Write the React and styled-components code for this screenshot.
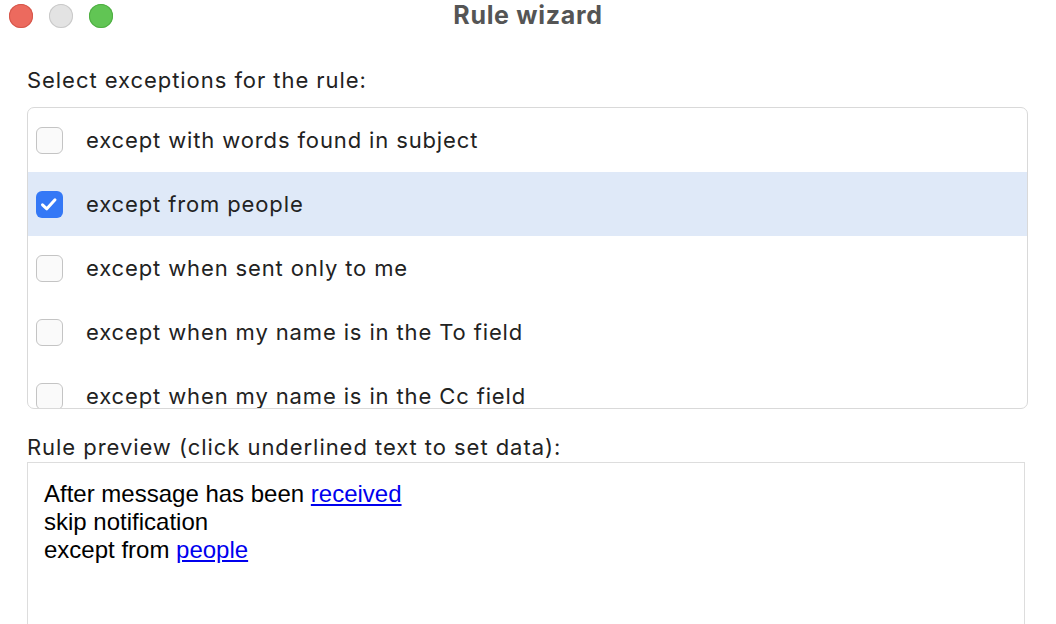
import styled, { createGlobalStyle } from "styled-components";

const EXCEPTIONS = [
  { id: "subject", label: "except with words found in subject", checked: false },
  { id: "people", label: "except from people", checked: true },
  { id: "only-me", label: "except when sent only to me", checked: false },
  { id: "to", label: "except when my name is in the To field", checked: false },
  { id: "cc", label: "except when my name is in the Cc field", checked: false },
];

const App = () => {
  return (
    <Window>
      <GlobalStyle />
      <TitleBar>
        <Lights>
          <Light color="#ec6a5e" edge="#d5574b" />
          <Light color="#e3e3e3" edge="#c9c9c9" />
          <Light color="#61c554" edge="#4fae43" />
        </Lights>
        <Title>Rule wizard</Title>
      </TitleBar>
      <Content>
        <SectionLabel>Select exceptions for the rule:</SectionLabel>
        <ExceptionList>
          {EXCEPTIONS.map(({ id, label, checked }) => (
            <ExceptionRow key={id} selected={checked}>
              <CheckBox checked={checked}>
                {checked && (
                  <svg width="27" height="27" viewBox="0 0 27 27">
                    <path
                      d="M6.5 13.8 L10.8 17.8 L19 8.8"
                      fill="none"
                      stroke="#fff"
                      strokeWidth="3"
                      strokeLinecap="round"
                      strokeLinejoin="round"
                    />
                  </svg>
                )}
              </CheckBox>
              <RowText>{label}</RowText>
            </ExceptionRow>
          ))}
        </ExceptionList>
        <PreviewLabel>Rule preview (click underlined text to set data):</PreviewLabel>
        <Preview>
          <div>
            After message has been <DataLink href="#">received</DataLink>
          </div>
          <div>skip notification</div>
          <div>
            except from <DataLink href="#">people</DataLink>
          </div>
        </Preview>
      </Content>
    </Window>
  );
};

export default App;

const GlobalStyle = createGlobalStyle`
  body {
    margin: 0;
    background: #ffffff;
    font-family: Inter, "Noto Sans", sans-serif;
    overflow: hidden;
  }
`;

const Window = styled.div`
  width: 1056px;
  height: 624px;
  background: #ffffff;
  overflow: hidden;
`;

const TitleBar = styled.div`
  height: 32px;
  display: flex;
  align-items: center;
  justify-content: center;
  position: relative;
`;

const Lights = styled.div`
  position: absolute;
  left: 9px;
  top: 4px;
  display: flex;
  gap: 16px;
`;

const Light = styled.span`
  width: 24px;
  height: 24px;
  border-radius: 50%;
  background: ${(p) => p.color};
  box-shadow: inset 0 0 0 1px ${(p) => p.edge};
`;

const Title = styled.div`
  font-size: 25px;
  font-weight: 700;
  letter-spacing: 0.7px;
  color: #555555;
  margin-top: -2px;
`;

const Content = styled.div`
  padding: 34px 27px 0 27px;
  display: flex;
  flex-direction: column;
`;

const SectionLabel = styled.div`
  font-size: 22px;
  letter-spacing: 0.95px;
  line-height: 28px;
  color: #222222;
  margin-bottom: 13px;
  white-space: nowrap;
`;

const ExceptionList = styled.div`
  height: 300px;
  border: 1.5px solid #d9d9d9;
  border-radius: 7px;
  overflow: hidden;
  width: 999px;
`;

const ExceptionRow = styled.div`
  height: 64px;
  display: flex;
  align-items: center;
  padding-left: 8px;
  background: ${(p) => (p.selected ? "#dfe9f8" : "transparent")};
`;

const CheckBox = styled.span`
  width: 27px;
  height: 27px;
  box-sizing: border-box;
  border-radius: 6px;
  display: flex;
  align-items: center;
  justify-content: center;
  background: ${(p) => (p.checked ? "#3478f6" : "#fafafa")};
  border: ${(p) => (p.checked ? "none" : "1.5px solid #c4c4c4")};
`;

const RowText = styled.span`
  margin-left: 23px;
  font-size: 22px;
  letter-spacing: 0.87px;
  color: #222222;
  white-space: nowrap;
`;

const PreviewLabel = styled(SectionLabel)`
  margin-top: 24px;
  margin-bottom: 1px;
`;

const Preview = styled.div`
  width: 998px;
  height: 200px;
  box-sizing: border-box;
  border: 1.5px solid #dddddd;
  padding: 17px 16px;
  font-family: "Liberation Sans", Arial, sans-serif;
  font-size: 24px;
  line-height: 28px;
  color: #000000;
`;

const DataLink = styled.a`
  color: #0000ee;
  text-decoration: underline;
`;
